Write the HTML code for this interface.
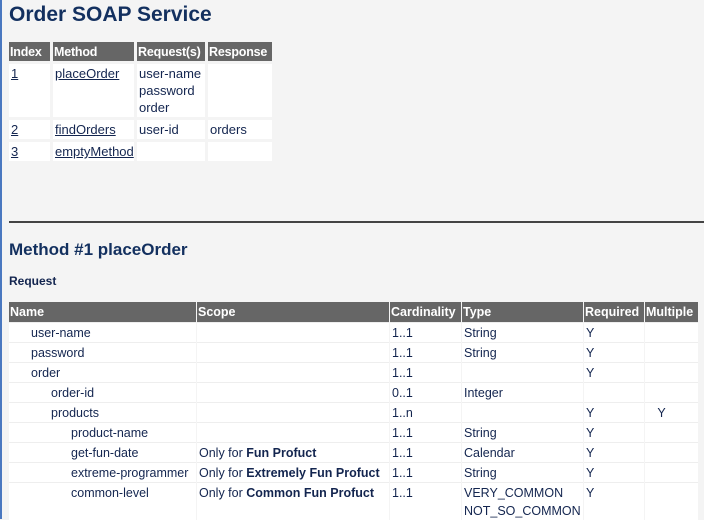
<!DOCTYPE html>
<html><head><style>
html,body{margin:0;padding:0}
body{width:704px;height:519px;overflow:hidden;background:#f4f4f4;border-left:2px solid #4a78c0;box-sizing:border-box;font-family:"Liberation Sans",sans-serif;font-size:13px;color:#13254f;position:relative}
h1{position:absolute;left:7px;top:3px;margin:0;font-size:21px;font-weight:bold;color:#13305f}
h2{position:absolute;left:7px;top:240px;margin:0;font-size:17px;font-weight:bold;color:#13305f}
.req{position:absolute;left:7px;top:274px;font-weight:bold;font-size:12px}
hr{position:absolute;left:7px;right:0;top:221px;margin:0;border:0;border-top:2px solid #444}
table{position:absolute;border-collapse:separate;table-layout:fixed}
th{background:#666;color:#fff;text-align:left;font-weight:bold;padding:0 1px;height:19px;white-space:nowrap;overflow:hidden}
td{background:#fff;vertical-align:top;padding:1px 2px;line-height:17px;white-space:nowrap}
a{color:#13254f}
#t1{left:4px;top:39px;border-spacing:3px;width:268px}
#t1 th{font-size:12.5px;letter-spacing:-0.2px}
#t2{left:6px;top:302px;border-spacing:1px 0;font-size:12.5px}
#t2 th{height:20px;padding:0 1px}
#t2 td{height:18px;padding:1px 2px 0;border-top:1px solid #eee;line-height:18px}
.i1{padding-left:22px!important}.i2{padding-left:42px!important}.i3{padding-left:62px!important}
</style></head><body>
<h1>Order SOAP Service</h1>
<table id="t1">
<colgroup><col style="width:41px"><col style="width:81px"><col style="width:68px"><col style="width:64px"></colgroup>
<tr><th>Index</th><th>Method</th><th>Request(s)</th><th>Response</th></tr>
<tr><td style="height:51px"><a href="#">1</a></td><td><a href="#">placeOrder</a></td><td>user-name<br>password<br>order</td><td></td></tr>
<tr><td><a href="#">2</a></td><td><a href="#">findOrders</a></td><td>user-id</td><td>orders</td></tr>
<tr><td><a href="#">3</a></td><td><a href="#">emptyMethod</a></td><td></td><td></td></tr>
</table>
<hr>
<h2>Method #1 placeOrder</h2>
<div class="req">Request</div>
<table id="t2">
<tr><th style="width:185px">Name</th><th style="width:190px">Scope</th><th style="width:69px">Cardinality</th><th style="width:119px">Type</th><th style="width:58px">Required</th><th style="width:51px">Multiple</th></tr>
<tr><td class="i1">user-name</td><td></td><td>1..1</td><td>String</td><td>Y</td><td></td></tr>
<tr><td class="i1">password</td><td></td><td>1..1</td><td>String</td><td>Y</td><td></td></tr>
<tr><td class="i1">order</td><td></td><td>1..1</td><td></td><td>Y</td><td></td></tr>
<tr><td class="i2">order-id</td><td></td><td>0..1</td><td>Integer</td><td></td><td></td></tr>
<tr><td class="i2">products</td><td></td><td>1..n</td><td></td><td>Y</td><td>&nbsp;&nbsp;&nbsp;Y</td></tr>
<tr><td class="i3">product-name</td><td></td><td>1..1</td><td>String</td><td>Y</td><td></td></tr>
<tr><td class="i3">get-fun-date</td><td>Only for <b>Fun Profuct</b></td><td>1..1</td><td>Calendar</td><td>Y</td><td></td></tr>
<tr><td class="i3">extreme-programmer</td><td>Only for <b>Extremely Fun Profuct</b></td><td>1..1</td><td>String</td><td>Y</td><td></td></tr>
<tr><td class="i3">common-level</td><td>Only for <b>Common Fun Profuct</b></td><td>1..1</td><td>VERY_COMMON<br>NOT_SO_COMMON</td><td>Y</td><td></td></tr>
</table>
</body></html>
